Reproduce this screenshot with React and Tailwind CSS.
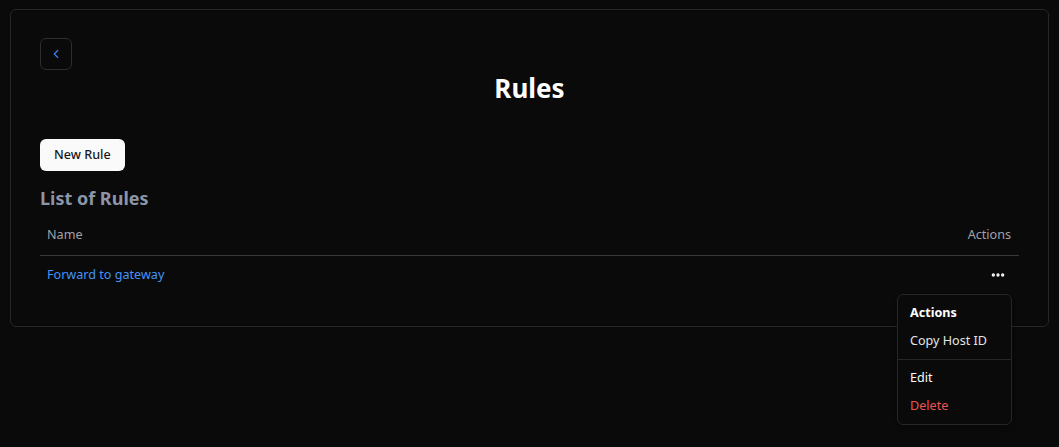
import { ChevronLeft, MoreHorizontal } from "lucide-react";

const App = () => {
    return (
        <div className="relative min-h-[447px] w-full bg-[#0a0a0a] pt-[9px] px-[10px]" style={{ fontFamily: '"Noto Sans", sans-serif' }}>
            <div className="rounded-md border border-[#262626] px-[29px] pt-[28px] pb-[31px]">
                <button className="flex h-8 w-8 items-center justify-center rounded-md border border-[#2e2e2e] text-[#3b82f6]">
                    <ChevronLeft size={14} strokeWidth={2} />
                </button>
                <h1 className="mt-0 text-center text-[26px] font-bold leading-9 text-white">Rules</h1>
                <button className="mt-[33px] h-8 rounded-md bg-[#fafafa] px-[14px] text-[12.6px] font-medium text-[#18181b]">New Rule</button>
                <h2 className="mt-[13px] text-[18px] font-bold leading-7 text-[#8c96a8]">List of Rules</h2>
                <table className="mt-[5px] w-full text-[12.6px]">
                    <thead>
                        <tr className="h-[38px] border-b border-[#3a3a3a]">
                            <th className="pl-[7px] pr-2 text-left font-normal text-[#a1a1aa]">Name</th>
                            <th className="px-2 text-right font-normal text-[#a1a1aa]">Actions</th>
                        </tr>
                    </thead>
                    <tbody>
                        <tr className="h-10">
                            <td className="pl-[7px] pr-2 text-[#4493f8]">Forward to gateway</td>
                            <td className="px-2 text-right">
                                <button className="ml-auto mr-[-3px] flex h-8 w-8 items-center justify-center text-white">
                                    <MoreHorizontal size={16} strokeWidth={3} />
                                </button>
                            </td>
                        </tr>
                    </tbody>
                </table>
            </div>

            {/* open actions menu */}
            <div className="absolute right-[47px] top-[294px] w-[115px] rounded-md border border-[#262626] bg-[#0a0a0a] p-1 text-[12.6px] shadow-md">
                <div className="px-2 py-1 leading-5 font-bold text-white">Actions</div>
                <div className="px-2 py-1 leading-5 text-[#e4e4e7]">Copy Host ID</div>
                <div className="-mx-1 my-1 h-px bg-[#262626]" />
                <div className="px-2 py-1 leading-5 text-[#fafafa]">Edit</div>
                <div className="px-2 py-1 leading-5 text-[#f05252]">Delete</div>
            </div>
        </div>
    );
};

export default App;
